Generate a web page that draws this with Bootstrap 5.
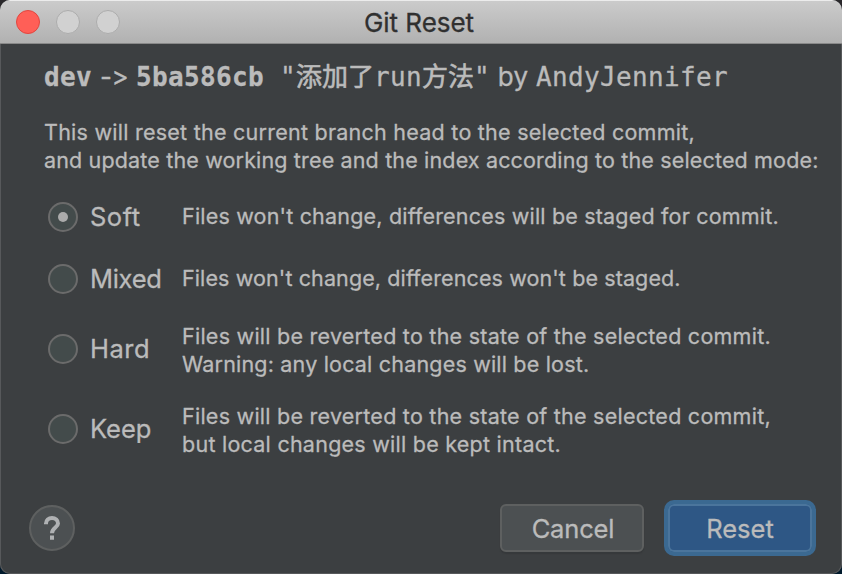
<!DOCTYPE html>
<html lang="en">
<head>
<meta charset="utf-8">
<meta name="viewport" content="width=device-width, initial-scale=1">
<title>Git Reset</title>
<link href="https://cdn.jsdelivr.net/npm/bootstrap@5.3.0/dist/css/bootstrap.min.css" rel="stylesheet">
<style>
  body { background: linear-gradient(#2a282b 50%, #001a2c 50%); font-family: Inter, "Noto Sans CJK SC", sans-serif; color: #bbb; -webkit-text-stroke: .3px; }
  .dialog { height: 574px; background: #3c3f41; border-radius: 10px; box-shadow: inset 0 0 0 1px #57595b; }
  .titlebar { height: 44px; background: linear-gradient(#cbcbcb, #b1b1b1); border-top: 1px solid #ececec; border-bottom: 1px solid #898989; padding-left: 16px; }
  .lights { gap: 16px; }
  .light { width: 24px; height: 24px; border: 1px solid #acacac; background: #d1d1d1; }
  .light-close { background: #ff5f57; border-color: #e2463f; }
  .title-text { font-size: 26px; line-height: 43px; color: #303030; letter-spacing: -.05px; padding-right: 4px; }
  .commit-line { padding: 14px 0 0 44px; font-size: 26px; line-height: 34px; height: 74px; white-space: pre; }
  .code { font-family: "DejaVu Sans Mono", "Noto Sans CJK SC", monospace; font-size: 26px; letter-spacing: .35px; }
  .cjk { font-family: "Noto Sans CJK SC", sans-serif; letter-spacing: 0; -webkit-text-stroke: .6px; }
  .arrow { display: inline-block; width: 44px; text-align: center; font-variant-ligatures: none; font-feature-settings: "calt" 0; letter-spacing: -.5px; }
  .by { letter-spacing: .3px; }
  .small-text { font-size: 21.5px; line-height: 28px; white-space: nowrap; letter-spacing: .19px; }
  .intro { padding-left: 44px; height: 85px; }
  .wider { letter-spacing: .25px; }
  .mid { letter-spacing: .155px; }
  .tighter { letter-spacing: .11px; }
  .option { padding-left: 48px; }
  .ring { width: 30px; height: 30px; border: 2px solid #6b6b6b; background: #434b4b; margin: 0 12px 0 0; }
  .ring.on::after { content: ""; width: 10px; height: 10px; border-radius: 50%; background: #ababab; }
  .name { width: 92px; font-size: 25.5px; line-height: 28px; }
  .name-wide { letter-spacing: .5px; }
  .name-tight { letter-spacing: -.3px; }
  .one { height: 28px; }
  .two { height: 56px; }
  .one .small-text { padding-bottom: 2px; }
  .two .small-text { padding-top: 2px; }
  .soft { margin-bottom: 34px; }
  .mixed { margin-bottom: 28px; }
  .hard { margin-bottom: 24px; }
  .help { width: 46px; height: 46px; background: #4c5052; border: 2px solid #5e6060; }
  .footer { padding: 0 26px 18px 29px; }
  .dlg-btn { font-size: 25.5px; line-height: 46px; padding: 0; color: #bbb; border-radius: 6px; }
  .cancel { width: 144px; height: 48px; background: #4c5052; border: 2px solid #5e6060; box-shadow: 0 2px 1px #36393b; margin-right: 20px; letter-spacing: -.15px; padding-left: 2px; }
  .reset { width: 152px; height: 56px; background: #2e5785; border: 4px solid #3b6991; border-radius: 10px; box-shadow: inset 0 0 0 2px #4b759c; line-height: 50px; }
</style>
</head>
<body class="overflow-hidden">
<main class="dialog d-flex flex-column overflow-hidden">
  <header class="titlebar d-flex position-relative flex-shrink-0">
    <div class="lights d-flex align-items-center">
      <span class="light light-close rounded-circle"></span>
      <span class="light rounded-circle"></span>
      <span class="light rounded-circle"></span>
    </div>
    <div class="title-text position-absolute start-0 end-0 text-center">Git Reset</div>
  </header>
  <div class="commit-line"><b class="code">dev</b><span class="arrow">-&gt;</span><b class="code">5ba586cb</b><span class="code"> "<span class="cjk">添加了</span>run<span class="cjk">方法</span>"</span><span class="by"> by </span><span class="code">AndyJennifer</span></div>
  <div class="intro small-text"><span class="wider">This will reset the current branch head to the selected commit,</span><br><span class="mid">and update the working tree and the index according to the selected mode:</span></div>
  <div class="option one soft d-flex align-items-center"><span class="ring on rounded-circle d-flex align-items-center justify-content-center"></span><span class="name name-wide">Soft</span><span class="small-text">Files won't change, differences will be staged for commit.</span></div>
  <div class="option one mixed d-flex align-items-center"><span class="ring rounded-circle"></span><span class="name name-tight">Mixed</span><span class="small-text tighter">Files won't change, differences won't be staged.</span></div>
  <div class="option two hard d-flex align-items-center"><span class="ring rounded-circle"></span><span class="name name-wide">Hard</span><span class="small-text"><span class="wider">Files will be reverted to the state of the selected commit.</span><br>Warning: any local changes will be lost.</span></div>
  <div class="option two d-flex align-items-center"><span class="ring rounded-circle"></span><span class="name">Keep</span><span class="small-text"><span class="wider">Files will be reverted to the state of the selected commit,</span><br><span class="wider">but local changes will be kept intact.</span></span></div>
  <footer class="footer d-flex align-items-center mt-auto">
    <button class="help rounded-circle p-0 me-auto d-flex align-items-center justify-content-center" aria-label="Help">
      <svg width="18" height="26" viewBox="0 0 18 26"><path d="M3 9.2V8.5a6 5.6 0 0 1 12 0c0 4-6 4.4-6 9.8" fill="none" stroke="#afb1b3" stroke-width="4"/><path d="M7 20.6h4v4.2H7z" fill="#afb1b3"/></svg>
    </button>
    <button class="btn dlg-btn cancel">Cancel</button>
    <button class="btn dlg-btn reset">Reset</button>
  </footer>
</main>
<script src="https://cdn.jsdelivr.net/npm/bootstrap@5.3.0/dist/js/bootstrap.bundle.min.js"></script>
</body>
</html>
